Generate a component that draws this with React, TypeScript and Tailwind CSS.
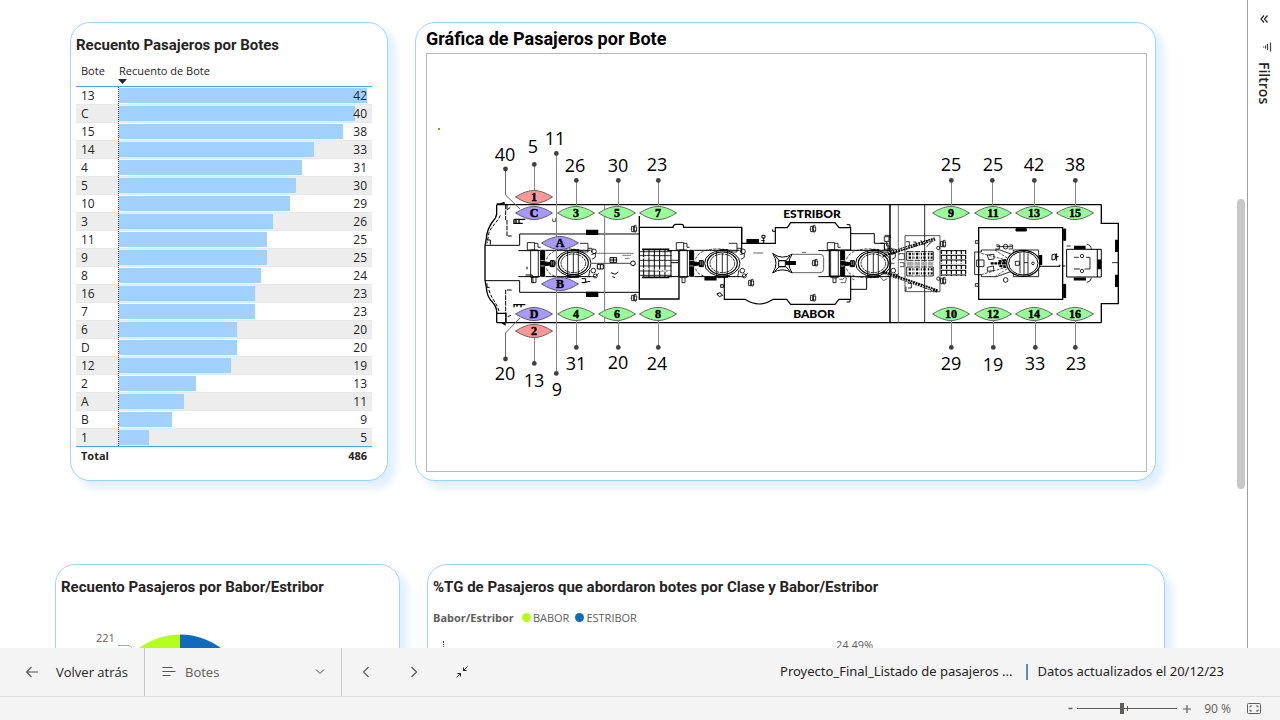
import { useState } from "react";
import type { ReactNode } from "react";

const ROWS: [string, number][] = [
  ["13", 42], ["C", 40], ["15", 38], ["14", 33], ["4", 31], ["5", 30], ["10", 29], ["3", 26], ["11", 25], ["9", 25],
  ["8", 24], ["16", 23], ["7", 23], ["6", 20], ["D", 20], ["12", 19], ["2", 13], ["A", 11], ["B", 9], ["1", 5],
];

const GREEN = "#99ff99";
const PURPLE = "#a899ff";
const RED = "#ff9999";

// name, x, y, fill
const BOATS: [string, number, number, string][] = [
  ["1", 534, 197, RED], ["C", 534, 213, PURPLE], ["3", 576, 213, GREEN], ["5", 617, 213, GREEN], ["7", 658, 213, GREEN],
  ["A", 560, 243, PURPLE], ["B", 560, 284, PURPLE],
  ["D", 534, 314, PURPLE], ["2", 534, 331, RED], ["4", 576, 314, GREEN], ["6", 617, 314, GREEN], ["8", 658, 314, GREEN],
  ["9", 951, 213, GREEN], ["11", 993, 213, GREEN], ["13", 1034, 213, GREEN], ["15", 1075, 213, GREEN],
  ["10", 951, 314, GREEN], ["12", 993, 314, GREEN], ["14", 1034, 314, GREEN], ["16", 1075, 314, GREEN],
];

// value, text x, baseline, dot x, dot y, y where the leader ends
const VALUES: [number, number, number, number, number, number][] = [
  [5, 533, 153, 534, 164, 190], [11, 555, 145, 556, 153, 263], [26, 575, 172, 576, 180, 206],
  [30, 618, 172, 618, 180, 206], [23, 657, 171, 658, 180, 206],
  [25, 951, 171, 951, 180, 206], [25, 993, 171, 992, 180, 206], [42, 1034, 171, 1034, 180, 206], [38, 1075, 171, 1075, 180, 206],
  [13, 534, 387, 534, 363, 338], [9, 557, 396, 556, 373, 263], [31, 576, 370, 576, 347, 321],
  [20, 618, 369, 618, 347, 321], [24, 657, 370, 658, 347, 321],
  [29, 951, 370, 951, 347, 321], [19, 993, 371, 993, 347, 321], [33, 1035, 370, 1035, 347, 321], [23, 1076, 370, 1075, 347, 321],
];

function Funnel({ x }: { x: number }) {
  return (
    <g transform={`translate(${x} 263.3) scale(.3333)`} fill="none" stroke="#000" strokeWidth="3">
      <path d="M-165-38H-100M-165 40H-100M-84-39H52M-84 40H52" />
      <path d="M-128-40h23v82h-23zM-138-62h22v22h-22zM-116-60h10v12h8M-112 42v16h-9v-16M20-60h24v26h-24M44-45h12v12" strokeWidth="2.5" />
      <path d="M-98-39h12v78h-12z" fill="#000" />
      <path d="M-98-8h12M-98 8h12" stroke="#fff" strokeWidth="2" />
      <path d="M-85-4l16 2v-6h12v18h-12v-5l-16 2z" fill="#000" />
      <path d="M-65-6v12M-60-6v12" stroke="#fff" strokeWidth="1.5" />
      <path d="M-80-12C-72-48 0-48 30-36M-80 16C-72 50 0 46 26 38" strokeDasharray="9 4" strokeWidth="2" />
      <ellipse rx="53" ry="39" strokeWidth="3" />
      <ellipse rx="45" ry="34" strokeWidth="3.5" />
      <ellipse rx="37" ry="28" strokeDasharray="8 2" strokeWidth="2.5" />
      <path d="M-17-38V38M0-30V30M15-38V38" strokeWidth="2.5" />
      <path d="M-8-39h25M-18 40h35" strokeWidth="6" />
      <circle cx="62" cy="-36" r="7" strokeWidth="2.5" />
      <circle cx="60" cy="22" r="7" strokeWidth="2.5" />
      <circle cx="66" cy="38" r="6" strokeWidth="2.5" />
      <path d="M54-26l12-4v12l-10 6M50 20l-4 20h20l10-10" strokeWidth="2.5" />
    </g>
  );
}

function Winch({ x, y }: { x: number; y: number }) {
  return (
    <g transform={`translate(${x} ${y}) scale(.3333)`} fill="none" stroke="#000" strokeWidth="2.5">
      <path d="M-7-8h6v16h-6zM1-12v22M-1-6h9v12h-9M-10 0h3M3-12l5 3M3 10l5-3" />
    </g>
  );
}

function ShipPlan() {
  const thin = "#777";
  return (
    <g fill="none" stroke="#000">
      <g transform="translate(475 190) scale(.3333)" strokeWidth="4">
        <path d="M66 44H1880M66 398H1880" />
        <path d="M65 42h10l12-4v6M65 44V72Q64 84 52 96Q36 118 34 145L30 168V270L34 292Q36 322 52 336Q65 350 65 366V398M65 370h28v27M80 398l10 6v-6" />
        <path d="M76 76C68 96 52 104 42 128L36 160M42 300C48 326 66 338 72 364" strokeDasharray="10 5" strokeWidth="3" />
        <path d="M92 44V90M96 90V138h14M96 44v16l10-8M92 398V300h20M98 380l10-4" strokeDasharray="14 3" strokeWidth="3" />
        <path d="M30 166H134V132H493M30 272H134V307H493M36 150h10v14M36 280v12h8" strokeWidth="3" />
        <path d="M117 88h34M117 88v12h26M123 89v10M132 89v10M115 344h36M117 344v8M126 344v6M138 344v8" strokeWidth="4" />
        <path d="M233 94h9v-10M233 86v8" strokeWidth="2" />
        <path d="M335 121h33v12h-33zM335 307h33v12h-33z" fill="#000" />
        <path d="M389 44V398" stroke={thin} strokeWidth="3" />
        <path d="M360 190H476M442 196h26M450 205h14" strokeWidth="2" stroke="#333" />
        <path d="M350 220H466" strokeWidth="3" stroke="#444" />
        <circle cx="474" cy="220" r="7" strokeWidth="3" />
        <path d="M405 203h20v14h-20zM415 203v14M405 210h20M367 223h18v14h-18zM376 223v14M408 248l12 5 10-7M412 260l8 3M320 266h12v12h-12M322 278l24-4" strokeWidth="3" />
        <path d="M156 230v8M152 255h20v10M170 262v16h6" strokeWidth="3" />
        <path d="M493 78V327H612V262M493 112H594q2-9 8-9h18q6 0 6 9H800V160" />
        <path d="M501 178h82M501 262h82" strokeWidth="5" />
        <path d="M495 185H590M495 197H590M495 211H612M495 228H590M495 243H590M495 256H590" strokeWidth="2.5" />
        <path d="M506 180V262M522 180V262M538 180V262M554 180V262M570 180V262M588 180V262M611 182V262" strokeWidth="3" />
        <path d="M500 235l90 10M498 205l30-6" stroke="#fff" strokeWidth="4" strokeDasharray="9 4" />
        <path d="M588 218h24" strokeWidth="3" />
      </g>
      <Winch x={634} y={229} />
      <Winch x={634} y={298} />
      <Funnel x={573.3} />
      <Funnel x={722.3} />
      <Funnel x={873.3} />
      <g transform="translate(690 190) scale(.3333)" strokeWidth="3.5">
        <path d="M155 112V190M155 160H256V113H292L302 98H435L447 113H482V160M482 160V180H418V258H482V328H447L435 343H302L290 328H250Q208 356 165 328H103V260" />
        <path d="M482 131H553V160H583V180M482 298H530V262" strokeWidth="3" />
        <path d="M171 149h34v10h-34zM45 262h33v8h-33z" fill="#000" />
        <path d="M216 136h9v8h-9zM221 144v16M214 152h10M248 118v6h8M470 104h10v8M470 336h10v-8M92 284h8v8h-8zM80 312l10-4 8 8-10 4z" strokeWidth="3" />
        <path d="M248 190Q276 212 307 192Q286 220 307 249Q276 230 248 249Q268 220 248 190zM254 196l14 16h20l12-14M254 244l14-14h20l12 14M266 212v18h20v-18z" strokeWidth="3" />
        <path d="M289 215h27v8h-27z" fill="#000" />
        <path d="M308 193H390q11 0 11 10V238q0 10-11 10H308M190 189H220M336 187h12M600 220h14M430 266h10M448 268h10q4-8 12-4l-4 14h-14M572 262l8 10 12-6M486 266l8 4" stroke="#444" strokeWidth="2.5" />
        <path d="M583 140h14v14h-14zM590 154v14h8v10h-14v-8M584 136h16l2 8" strokeWidth="2.5" />
        <path d="M600 44V398" strokeWidth="4.5" />
        <path d="M625 44V398" strokeWidth="2.5" stroke="#555" />
      </g>
      <Winch x={813} y={229} />
      <Winch x={815} y={263} />
      <Winch x={813} y={298} />
      <Winch x={751} y={283} />
      <g transform="translate(880 140) scale(.3333)" strokeWidth="3.5">
        <path d="M134 195V547" strokeWidth="2.5" />
        <path d="M664 195V250H715V491H664V547" strokeWidth="4" />
        <path d="M75 287H180V455H75zM57 345v-4h16v18h-16M60 368h12v12h-12" strokeWidth="2" />
        <path d="M8 346L165 297M8 396L172 453" strokeWidth="10" strokeDasharray="6 2" />
        <path d="M8 343L160 300M16 402L160 450" stroke="#fff" strokeWidth="2.5" strokeDasharray="5 4" />
        <path d="M80 335H160V361H80zM80 381H160V408H80z" strokeWidth="2.5" />
        <path d="M80 365H160V377H80z" fill="#aaa" stroke="none" />
        <path d="M86 342H158M86 353H158M86 388H158M86 400H158" strokeWidth="7" strokeDasharray="7 4" />
        <path d="M102 333v76M122 333v76M142 333v76" stroke="#fff" strokeWidth="3" />
        <path d="M78 305h10v14M100 306h8v12h-8M122 300l10 14 12-14M140 320l18-18M84 430h10v14h-10M78 440v14" strokeWidth="2.5" />
        <circle cx="175" cy="324" r="5" strokeWidth="2.5" />
        <circle cx="175" cy="416" r="5" strokeWidth="2.5" />
        <path d="M182 332H258M182 346H258M182 360H258M182 376H258M182 391H258M182 405H258" strokeWidth="3" />
        <path d="M184 330V408M200 330V408M214 330V408M229 330V408M244 330V408M257 330V408" strokeWidth="3.5" strokeDasharray="12 3" />
        <path d="M182 368H258" stroke="#fff" strokeWidth="5" strokeDasharray="12 8" />
        <path d="M296 263H548V478H296z" strokeWidth="4" />
        <path d="M408 266h31v7h-31zM551 267h6v34h-6zM551 433h6v40h-6z" strokeWidth="3" fill="#000" />
        <path d="M286 302h9v8h-9zM286 431h9v8h-9z" strokeWidth="2.5" fill="#fff" />
        <path d="M284 336H304V330H360L400 345M284 336V404H304V410H350L400 392M290 360h22v20h-22zM400 330H476V410H400z" strokeWidth="2.5" />
        <path d="M304 340L385 362M304 404L385 380M345 330l40 26M345 410l40-26" strokeWidth="2" strokeDasharray="8 4" />
        <path d="M322 345l20-2v14l-16 2zM322 382l18-4 2 14-20 2zM348 315h10v12h-12M388 315h10v12h-12M350 320h46" strokeWidth="2.5" />
        <circle cx="377" cy="320" r="7" strokeWidth="2.5" />
        <circle cx="377" cy="420" r="7" strokeWidth="2.5" />
        <path d="M332 370H372M356 364L374 361V380L356 377" strokeWidth="7" strokeDasharray="9 2" />
        <ellipse cx="430" cy="370" rx="50" ry="39" fill="#fff" strokeWidth="3.5" />
        <ellipse cx="430" cy="370" rx="44" ry="35" strokeWidth="3" />
        <path d="M406 364h12v12h-12zM432 332V408M420 340v60M444 340v62M432 368h12" strokeWidth="2.5" />
        <circle cx="459" cy="370" r="4" strokeWidth="2.5" />
        <path d="M479 347h6v26h-6z" fill="#000" />
        <path d="M480 379H540M536 376h6M548 378h8M516 345l10-3v16l-10 2zM530 340v22M526 350h10" strokeWidth="3" />
        <path d="M560 328H664V411H560zM652 328v83" strokeWidth="3" />
        <path d="M654 360h8v26h-8zM584 319h31v6h-31zM583 414h33v6h-33zM707 301h7v33h-7zM707 406h7v33h-7z" fill="#000" />
        <path d="M582 352H596M618 352H630V387H614M600 387H582M560 318h12M620 312q14 4 14 16M620 428q14-4 14-14M696 368h18" strokeWidth="2.5" />
        <circle cx="606" cy="348" r="5" strokeWidth="2.5" />
        <circle cx="606" cy="393" r="5" strokeWidth="2.5" />
      </g>
      <Winch x={943} y={244} />
      <Winch x={943} y={281} />
    </g>
  );
}

function BoatMap() {
  return (
    <svg viewBox="427 54 719 417" className="block w-full" role="img" aria-label="Gráfica de Pasajeros por Bote">
      <ShipPlan />
      <rect x="438" y="128" width="2" height="2" fill="#b08a30" />
      <g fill="none" stroke="#8a8a8a" strokeWidth="1">
        <path d="M505.500 169V195L520 209M505.500 359V333L520 318" stroke="#666" />
        {VALUES.map(([, , , x, y, end], i) => (
          <path key={i} d={`M${x}.5 ${y}V${end}`} />
        ))}
      </g>
      <g fill="#404040">
        <circle cx="505.5" cy="169" r="2.4" />
        <circle cx="505.5" cy="359" r="2.4" />
        {VALUES.map(([, , , x, y], i) => (
          <circle key={i} cx={x + 0.3} cy={y + 0.4} r="2.4" />
        ))}
      </g>
      <g className="font-['Open_Sans',sans-serif]" fontSize="18" textAnchor="middle" fill="#000">
        <text x="505" y="161">40</text>
        <text x="505" y="380">20</text>
        {VALUES.map(([v, x, y], i) => (
          <text key={i} x={x} y={y}>{v}</text>
        ))}
      </g>
      {BOATS.map(([name, x, y, fill]) => (
        <g key={name}>
          <path
            d={`M${x - 18.5} ${y}Q${x - 8} ${y - 6.6} ${x} ${y - 6.6}Q${x + 8} ${y - 6.6} ${x + 18.5} ${y}Q${x + 8} ${y + 6.6} ${x} ${y + 6.6}Q${x - 8} ${y + 6.6} ${x - 18.5} ${y}z`}
            fill={fill}
            stroke="#444"
            strokeWidth=".8"
          />
          <text
            x={x}
            y={y + 4}
            className="font-['Liberation_Serif',serif] font-bold"
            fontSize="12"
            textAnchor="middle"
            stroke="#000"
            strokeWidth=".5"
          >
            {name}
          </text>
        </g>
      ))}
      <g className="font-['Lato',sans-serif] font-black" fontSize="12" textAnchor="middle">
        <text x="812" y="218">ESTRIBOR</text>
        <text x="814" y="318">BABOR</text>
      </g>
    </svg>
  );
}

function Card({ className, children }: { className: string; children: ReactNode }) {
  return (
    <section className={`rounded-[20px] border border-[#a0d1ff] bg-white shadow-[7px_7px_10px_#deeeff] ${className}`}>
      {children}
    </section>
  );
}

function BoatTable() {
  return (
    <table className="w-full border-collapse text-xs leading-[17px] text-[#252423]">
      <thead>
        <tr className="h-6 border-b border-[#4ba3f5] align-top text-[11px]">
          <th scope="col" className="w-[42px] pl-[5px] text-left font-normal">Bote</th>
          <th scope="col" className="text-left font-normal">
            <div className="pl-px">Recuento de Bote</div>
            <div className="h-[5px] w-[9px] bg-[#252423] [clip-path:polygon(0_0,100%_0,50%_100%)]" />
          </th>
        </tr>
      </thead>
      <tbody>
        {ROWS.map(([name, value]) => (
          <tr key={name} className="h-[18px] border-b border-[#e8e8e8] even:bg-[#ededed] last:border-[#4ba3f5]">
            <td className="pl-[5px]">{name}</td>
            <td className="pr-[5px] pl-0">
              <div className="grid border-l border-dotted border-[#444]">
                <div className="col-start-1 row-start-1 h-[15px] self-center bg-[#a0d1ff]" style={{ width: `${(value / 42) * 100}%` }} />
                <span className="col-start-1 row-start-1 text-right">{value}</span>
              </div>
            </td>
          </tr>
        ))}
      </tbody>
      <tfoot>
        <tr className="h-[18px] text-[11px] font-bold">
          <td className="pl-[5px]">Total</td>
          <td className="pr-[5px] text-right">486</td>
        </tr>
      </tfoot>
    </table>
  );
}

const cardTitle = "font-['Roboto',sans-serif] text-[15px] leading-5 font-bold text-[#252423]";
const icon = "fill-none stroke-[#555]";

export default function App() {
  const [zoom, setZoom] = useState(45);
  return (
    <div className="flex h-screen flex-col overflow-hidden bg-white font-['Open_Sans',sans-serif] text-[#252423]">
      <div className="flex min-h-0 flex-1">
        <main className="min-w-0 flex-1 overflow-hidden pt-[22px]">
          <div className="flex items-stretch gap-[27px] pr-[81px] pl-[70px]">
            <Card className="w-[318px] shrink-0 pt-3 pr-[15px] pb-[15px] pl-[5px]">
              <h2 className={`${cardTitle} mb-[7px]`}>Recuento Pasajeros por Botes</h2>
              <BoatTable />
            </Card>
            <Card className="min-w-0 flex-1 pt-1 pr-2 pb-2 pl-[10px]">
              <h2 className="mb-[2px] font-['Roboto',sans-serif] text-lg leading-6 font-bold text-black">Gráfica de Pasajeros por Bote</h2>
              <div className="border border-[#b8b8b8]">
                <BoatMap />
              </div>
            </Card>
          </div>
          <div className="mt-[83px] flex gap-[27px] pr-[72px] pl-[55px]">
            <Card className="w-[345px] shrink-0 pt-3 pl-[5px]">
              <h2 className={cardTitle}>Recuento Pasajeros por Babor/Estribor</h2>
              <svg viewBox="0 0 320 180" className="mt-8 block w-[320px]" role="img" aria-label="Babor 221, Estribor 265">
                <path d="M119 5.500A68.500 68.500 0 0 0 119 142.500z" fill="#b5ff1c" />
                <path d="M119 5.500A68.500 68.500 0 0 1 119 142.500z" fill="#0f6cbd" />
                <path d="M57 16.500H68Q70 17 75 24" fill="none" stroke="#aaa" />
                <text x="35" y="13" fontSize="11" fill="#605e5c">221</text>
              </svg>
            </Card>
            <Card className="min-w-0 flex-1 pt-3 pl-[5px]">
              <h2 className={cardTitle}>%TG de Pasajeros que abordaron botes por Clase y Babor/Estribor</h2>
              <div className="mt-3 flex items-center text-[11px] leading-[17px] text-[#605e5c]">
                <span className="mr-2 font-bold">Babor/Estribor</span>
                <span className="mr-[2px] size-[9px] rounded-full bg-[#b5ff1c]" />
                <span className="mr-[6px]">BABOR</span>
                <span className="mr-[2px] size-[9px] rounded-full bg-[#0f6cbd]" />
                <span>ESTRIBOR</span>
              </div>
              <div className="flex pt-[11px] pl-[10px] text-[11px] leading-4 text-[#605e5c]">
                <span className="mt-1 h-20 border-l border-dotted border-[#444]" />
                <span className="ml-[392px]">24.49%</span>
              </div>
            </Card>
          </div>
        </main>
        <div className="w-[10px] shrink-0 pt-[199px]">
          <div className="h-[290px] w-2 rounded-full bg-[#c8c8c8]" />
        </div>
        <aside className="flex w-[33px] shrink-0 flex-col items-center border-l border-[#a0a0a0] pt-[14px]">
          <button aria-label="Expandir filtros">
            <svg viewBox="0 0 10 10" className="size-[10px] fill-none stroke-[#252423]" strokeWidth="1.2">
              <path d="M5 1.500L2 5l3 3.500M8.500 1.500L5.500 5l3 3.500" />
            </svg>
          </button>
          <svg viewBox="0 0 10 10" className="mt-[18px] ml-[6px] size-[10px] fill-none stroke-[#444]">
            <path d="M8.500 .5v9M5.500 2v6M3.500 3.500v3M1.500 4.500v1" strokeWidth="1.2" />
          </svg>
          <span className="mt-[10px] text-sm leading-5 font-semibold [writing-mode:vertical-rl]">Filtros</span>
        </aside>
      </div>
      <footer className="bg-[#f4f4f4]">
        <div className="flex h-[49px] items-stretch border-b border-[#dedede]">
          <button className="flex w-[145px] items-center border-r border-[#c8c8c8] pl-[25px] text-[13px]">
            <svg viewBox="0 0 14 12" className={`mr-[17px] h-3 w-[14px] ${icon}`} strokeWidth="1.1">
              <path d="M13 6H1.500M6.500 1l-5 5 5 5" />
            </svg>
            <span className="pt-[2px]">Volver atrás</span>
          </button>
          <label className="grid w-[197px] grid-cols-[14px_1fr_10px] items-center border-r border-[#c8c8c8] pr-4 pl-[17px]">
            <svg viewBox="0 0 14 12" className={`col-start-1 row-start-1 h-3 w-[14px] ${icon}`}>
              <path d="M.5 1.500h10M.5 5.500h13M.5 9.500h8" />
            </svg>
            <select aria-label="Página" className="col-span-3 col-start-1 row-start-1 h-8 appearance-none bg-transparent pt-[2px] pl-[23px] text-[13px] text-[#605e5c]">
              <option>Botes</option>
            </select>
            <svg viewBox="0 0 10 6" className={`pointer-events-none col-start-3 row-start-1 h-[6px] w-[10px] ${icon}`}>
              <path d="M1 .5l4 4 4-4" />
            </svg>
          </label>
          <button aria-label="Página anterior" className="flex w-12 items-center justify-center">
            <svg viewBox="0 0 8 12" className={`h-3 w-2 ${icon}`} strokeWidth="1.1"><path d="M6.500 1L1.500 6l5 5" /></svg>
          </button>
          <button aria-label="Página siguiente" className="flex w-12 items-center justify-center">
            <svg viewBox="0 0 8 12" className={`h-3 w-2 ${icon}`} strokeWidth="1.1"><path d="M1.500 1l5 5-5 5" /></svg>
          </button>
          <button aria-label="Salir de pantalla completa" className="flex w-12 items-center justify-center">
            <svg viewBox="0 0 12 12" className="size-3 fill-none stroke-[#252423]">
              <path d="M11.500 .5l-4 4M7.500 1.500v3h3M.5 11.500l4-4M1.500 7.500h3v3" />
            </svg>
          </button>
          <div className="ml-auto flex items-center pr-14 font-['Noto_Sans',sans-serif] text-[13px]">
            <span>Proyecto_Final_Listado de pasajeros ...</span>
            <span className="mr-[10px] ml-[13px] h-4 w-[2px] bg-[#5b8fb5]" />
            <span>Datos actualizados el 20/12/23</span>
          </div>
        </div>
        <div className="flex h-[23px] items-center justify-end pr-[19px] text-xs text-[#605e5c]">
          <button aria-label="Alejar" className="mr-1">
            <svg viewBox="0 0 5 9" className="h-[9px] w-[5px]"><path d="M.5 4.500h4" stroke="#605e5c" strokeWidth="1.500" /></svg>
          </button>
          <div className="grid w-[100px] items-center">
            <span className="col-start-1 row-start-1 h-[5px] w-px justify-self-center bg-[#605e5c]" />
            <input
              type="range"
              aria-label="Zoom"
              value={zoom}
              onChange={(e) => setZoom(Number(e.target.value))}
              className="col-start-1 row-start-1 h-px w-full appearance-none bg-[#605e5c] [&::-webkit-slider-thumb]:h-[11px] [&::-webkit-slider-thumb]:w-1 [&::-webkit-slider-thumb]:appearance-none [&::-webkit-slider-thumb]:bg-[#605e5c]"
            />
          </div>
          <button aria-label="Acercar" className="ml-[6px]">
            <svg viewBox="0 0 8 8" className="size-2"><path d="M0 4h8M4 0v8" stroke="#605e5c" strokeWidth="1.200" /></svg>
          </button>
          <span className="ml-[13px]">90 %</span>
          <button aria-label="Ajustar a la página" className="ml-4">
            <svg viewBox="0 0 14 11" className="block h-[11px] w-[14px] fill-none stroke-[#605e5c]">
              <rect x=".5" y=".5" width="13" height="10" rx="1" />
              <path d="M3 4.500V3h2M9 3h2v1.500M11 6.500V8H9M5 8H3V6.500" />
            </svg>
          </button>
        </div>
      </footer>
    </div>
  );
}
